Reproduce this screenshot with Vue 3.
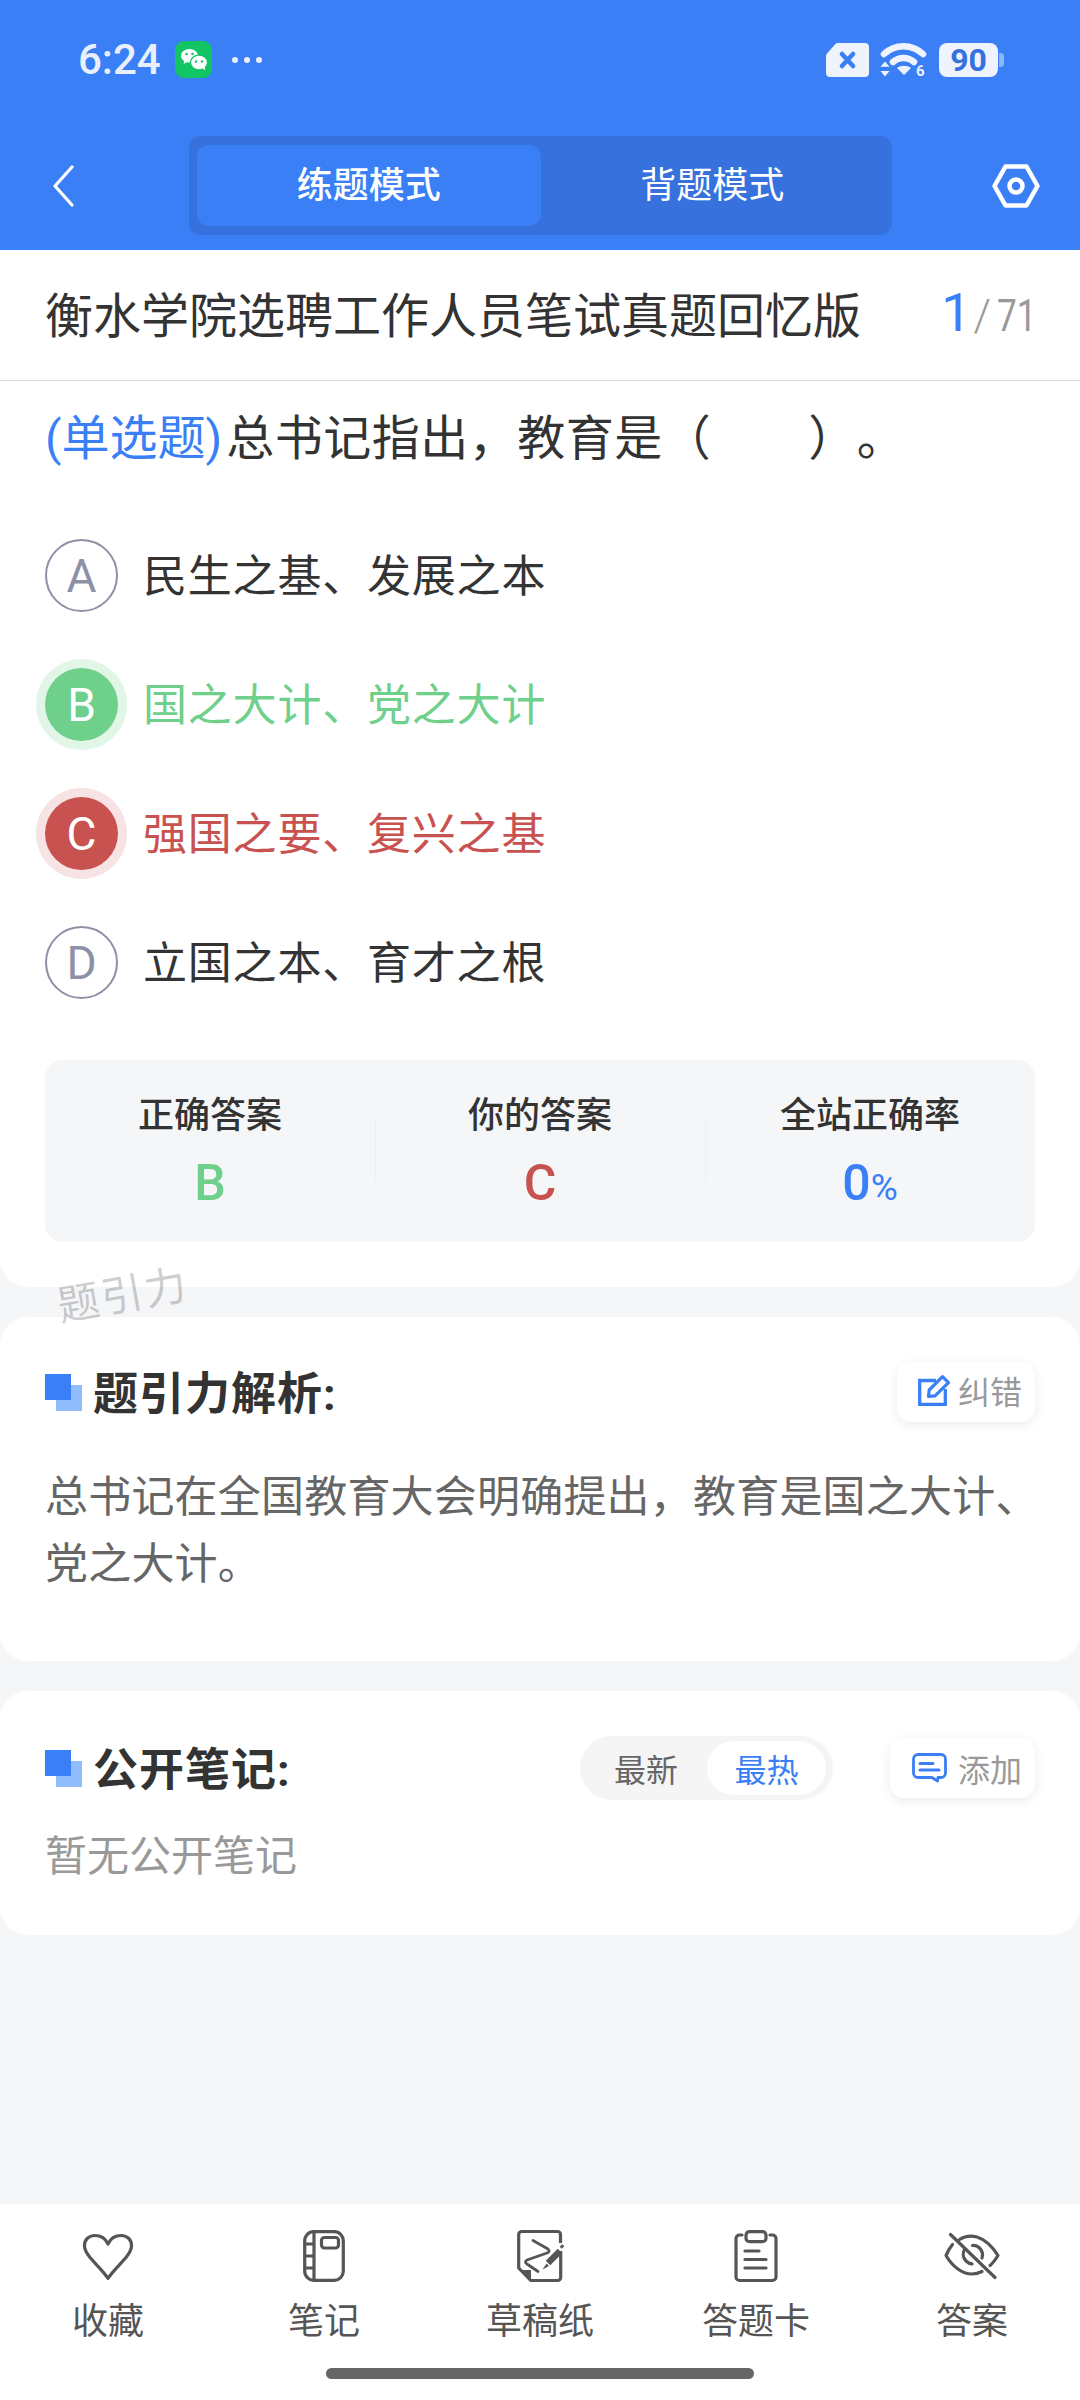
<script setup>
const options = [
  { key: 'A', text: '民生之基、发展之本', state: '' },
  { key: 'B', text: '国之大计、党之大计', state: 'right' },
  { key: 'C', text: '强国之要、复兴之基', state: 'wrong' },
  { key: 'D', text: '立国之本、育才之根', state: '' },
];
</script>

<template>
  <div class="page">
    <header class="top">
      <div class="status">
        <span class="time">6:24</span>
        <svg class="wechat" viewBox="0 0 37 37">
          <rect width="37" height="37" rx="9" fill="#11c464" />
          <path d="M14.5 8C9.8 8 6 11 6 14.8c0 2.2 1.3 4.1 3.2 5.3L8.6 23l3.2-1.7c.9.2 1.8.3 2.7.3 4.7 0 8.5-3 8.5-6.8S19.2 8 14.5 8z" fill="#fff" />
          <ellipse cx="24" cy="21.5" rx="8.6" ry="7.4" fill="#fff" stroke="#11c464" stroke-width="1.4" />
          <path d="M27.5 27l2.6 2.4-.4-3.6z" fill="#fff" />
          <circle cx="11.5" cy="13" r="1.3" fill="#11c464" />
          <circle cx="17.5" cy="13" r="1.3" fill="#11c464" />
          <circle cx="21" cy="20.5" r="1.2" fill="#11c464" />
          <circle cx="27" cy="20.5" r="1.2" fill="#11c464" />
        </svg>
        <span class="dots"><i></i><i></i><i></i></span>
        <span class="status-right">
          <svg class="sim" viewBox="0 0 43 34">
            <path d="M12 0h27a4 4 0 0 1 4 4v26a4 4 0 0 1-4 4H4a4 4 0 0 1-4-4V13a4 4 0 0 1 1.2-2.8L9.2 1.2A4 4 0 0 1 12 0z" fill="#eef3fd" />
            <path d="M16 11l11 12M27 11L16 23" stroke="#3b7ff6" stroke-width="4.6" stroke-linecap="round" />
          </svg>
          <svg class="wifi" viewBox="0 0 47 42">
            <path d="M4 12C15 1.500 32 1.500 43 12" fill="none" stroke="#eef3fd" stroke-width="6.500" stroke-linecap="round" />
            <path d="M13 20C19 14.500 28 14.500 34 20" fill="none" stroke="#eef3fd" stroke-width="6.500" stroke-linecap="round" />
            <path d="M17 26c3.500-3 10.500-3 14 0l-7 7z" fill="#eef3fd" />
            <path d="M5 19.500l4.500 5.200H.5zM5 34.500l4.500-5.400H.5z" fill="#eef3fd" />
            <text x="36" y="34" class="wifi-six">6</text>
          </svg>
          <span class="battery"><span class="battery-num">90</span></span>
        </span>
      </div>
      <nav class="nav">
        <svg class="back" viewBox="0 0 22 42">
          <path d="M20 2L3 21l17 19" fill="none" stroke="#fff" stroke-width="3.200" stroke-linecap="round" stroke-linejoin="round" />
        </svg>
        <div class="tabs">
          <div class="tab active">练题模式</div>
          <div class="tab">背题模式</div>
        </div>
        <svg class="setting" viewBox="0 0 48 44">
          <path d="M13.500 2.500h21L45.500 22 34.500 41.500h-21L2.500 22z" fill="none" stroke="#fff" stroke-width="4.500" stroke-linejoin="round" />
          <circle cx="24" cy="22" r="6.500" fill="none" stroke="#fff" stroke-width="4.500" />
        </svg>
      </nav>
    </header>

    <section class="card question-card">
      <div class="title-row">
        <span class="paper-title">衡水学院选聘工作人员笔试真题回忆版</span>
        <span class="counter"><b>1</b><em>/</em><span class="total"><span>71</span></span></span>
      </div>
      <div class="question-body">
        <p class="question"><span class="q-type">(单选题)</span>总书记指出，教育是（　　）。</p>
        <ul class="options">
          <li v-for="opt in options" :key="opt.key" :class="['option', opt.state]">
            <span class="letter">{{ opt.key }}</span>
            <span class="opt-text">{{ opt.text }}</span>
          </li>
        </ul>
        <div class="stats">
          <div class="stat">
            <div class="stat-label">正确答案</div>
            <div class="stat-value green">B</div>
          </div>
          <div class="stat">
            <div class="stat-label">你的答案</div>
            <div class="stat-value red">C</div>
          </div>
          <div class="stat">
            <div class="stat-label">全站正确率</div>
            <div class="stat-value blue">0<small>%</small></div>
          </div>
        </div>
      </div>
    </section>

    <section class="card block analysis">
      <div class="block-head">
        <h2 class="block-title"><i class="mark"></i><span class="title-text">题引力解析:</span></h2>
        <div class="mini-btn fix">
          <svg class="edit-icon" viewBox="0 0 33 32">
            <path d="M18 6.500H1.700v23.800h25.600V15" fill="none" stroke="#3b7ff6" stroke-width="3.300" />
            <path d="M10.500 22.500l.7-6.500L24.500 2.700l6 6L17 21.800z" fill="none" stroke="#3b7ff6" stroke-width="3.200" stroke-linejoin="round" />
          </svg>
          <span>纠错</span>
        </div>
      </div>
      <p class="analysis-text">总书记在全国教育大会明确提出，教育是国之大计、党之大计。</p>
    </section>

    <section class="card block notes">
      <div class="block-head">
        <h2 class="block-title"><i class="mark"></i><span class="title-text">公开笔记:</span></h2>
        <div class="segment">
          <span class="seg">最新</span>
          <span class="seg on">最热</span>
        </div>
        <div class="mini-btn add">
          <svg class="add-icon" viewBox="0 0 35 30">
            <path d="M6 1.500h23a4.500 4.500 0 0 1 4.500 4.500v14a4.500 4.500 0 0 1-4.500 4.500h-3l-.5 3.500-5.500-3.500H6A4.500 4.500 0 0 1 1.500 20V6A4.500 4.500 0 0 1 6 1.500z" fill="none" stroke="#3b7ff6" stroke-width="2.800" stroke-linejoin="round" />
            <path d="M8 10.500h13M8 17h19" stroke="#3b7ff6" stroke-width="3" stroke-linecap="round" />
          </svg>
          <span>添加</span>
        </div>
      </div>
      <p class="empty">暂无公开笔记</p>
    </section>

    <footer class="bar">
      <div class="bar-items">
        <div class="bar-item">
          <svg class="bar-icon" viewBox="0 0 56 56" width="56" height="56">
            <path d="M28 50.500C20 38 4.500 28 4.500 17.500 4.500 11 9.500 7.500 15 7.500c5.500 0 10.500 3 13 8.500 2.500-5.500 7.500-8.500 13-8.500 5.500 0 10.500 3.500 10.500 10C51.500 28 36 38 28 50.500z" fill="none" stroke="#555" stroke-width="3.200" stroke-linejoin="round" />
          </svg>
          <span>收藏</span>
        </div>
        <div class="bar-item">
          <svg class="bar-icon" viewBox="0 0 56 56" width="56" height="56">
            <g transform="translate(7 2)" fill="none" stroke="#555" stroke-width="3.200">
              <rect x="1.700" y="1.700" width="38.600" height="48.600" rx="9" />
              <path d="M11 2v48M2 14h9M2 26h9M2 38h9" />
              <rect x="18.500" y="7.500" width="17" height="10.500" rx="3" />
            </g>
          </svg>
          <span>笔记</span>
        </div>
        <div class="bar-item">
          <svg class="bar-icon" viewBox="0 0 56 56" width="56" height="56">
            <g transform="translate(5 2)" fill="none" stroke="#555" stroke-width="3.200">
              <path d="M43.500 13V4.500a3 3 0 0 0-3-3H4.700a3 3 0 0 0-3 3V38l12 12.500h27a3 3 0 0 0 3-3V21" stroke-linejoin="round" />
              <path d="M1.500 40h12.500v10.500z" fill="#555" stroke="none" />
              <path d="M16 10.500l15 8.500c2 1.500 1 3-1 4L10 30c-2 1-2 3 0 4l11 7.500" stroke-width="2.800" stroke-linecap="round" stroke-linejoin="round" />
              <path d="M31 33l12-12" stroke-width="6.400" />
              <path d="M44 15.500l2 2" stroke-width="3.600" />
              <path d="M25.500 39.500l4-6 2.500 2.500z" fill="#555" stroke="none" />
            </g>
          </svg>
          <span>草稿纸</span>
        </div>
        <div class="bar-item">
          <svg class="bar-icon" viewBox="0 0 56 56" width="56" height="56">
            <g transform="translate(6 2)" fill="none" stroke="#555" stroke-width="3.200" stroke-linecap="round">
              <path d="M8 5H5.500a3.500 3.500 0 0 0-3.500 3.500v38.500a3.500 3.500 0 0 0 3.500 3.500h33a3.500 3.500 0 0 0 3.500-3.500V8.500A3.500 3.500 0 0 0 38.500 5H36" />
              <rect x="12" y="1.700" width="20" height="10" rx="3.500" />
              <path d="M11 21h14M11 29.500h21M11 38h21" />
            </g>
          </svg>
          <span>答题卡</span>
        </div>
        <div class="bar-item">
          <svg class="bar-icon" viewBox="0 0 56 56" width="56" height="56">
            <g transform="translate(0 5)" fill="none" stroke="#555" stroke-width="3.200" stroke-linecap="round">
              <path d="M6.500 1.500L51 44.500" />
              <path d="M15.500 6.500C21 3 27 2.500 33 4c8 2.500 15 9 21 18.500-2.500 4-5 7.500-8 10" stroke-linejoin="round" />
              <path d="M8.500 11.500C6 14.500 4 18 2 22.500 8 33 18 41 28 41c3.500 0 7-1 10-2.500" stroke-linejoin="round" />
              <path d="M21 15.500c-2.500 4-2.500 9 1 12.500 1.800 1.800 4 2.700 6 2.800" />
              <path d="M28.500 12.500c2.300-.3 5 .5 7 2.500 3 3 3.500 7 2.500 10" />
            </g>
          </svg>
          <span>答案</span>
        </div>
      </div>
      <div class="home-line"></div>
    </footer>

    <div class="watermark">题引力</div>
  </div>
</template>

<style>
html,
body {
  margin: 0;
  background: #f5f6f8;
}
</style>

<style scoped>
.page {
  position: relative;
  display: flex;
  flex-direction: column;
  width: 1080px;
  height: 2400px;
  overflow: hidden;
  background: #f5f6f8;
  color: #333;
  font-family: Roboto, "Noto Sans CJK SC", sans-serif;
}

p,
ul,
h2 {
  margin: 0;
  padding: 0;
}

/* header */
.top {
  height: 250px;
  box-sizing: border-box;
  padding-top: 41px;
  background: #3b7ff6;
}

.status {
  display: flex;
  align-items: center;
  height: 37px;
  padding: 0 82px 0 78px;
}

.time {
  width: 97px;
  font-size: 42px;
  font-weight: 500;
  line-height: 37px;
  color: #e9effd;
}

.wechat {
  width: 37px;
  height: 37px;
}

.dots {
  display: flex;
  gap: 6px;
  margin-left: 20px;
}

.dots i {
  width: 6px;
  height: 6px;
  border-radius: 50%;
  background: #e9effd;
}

.status-right {
  display: flex;
  align-items: center;
  margin-left: auto;
}

.sim {
  width: 43px;
  height: 34px;
}

.wifi {
  width: 47px;
  height: 42px;
  margin: 7px 0 0 11px;
}

.wifi-six {
  font-size: 15px;
  font-weight: 700;
  fill: #eef3fd;
}

.battery {
  position: relative;
  display: flex;
  align-items: center;
  justify-content: center;
  width: 59px;
  height: 34px;
  margin-left: 12px;
  border-radius: 8px;
  background: #eef3fd;
}

.battery::after {
  content: '';
  position: absolute;
  right: -6px;
  top: 10px;
  width: 5px;
  height: 14px;
  border-radius: 0 4px 4px 0;
  background: #8fb5f9;
}

.battery-num {
  font-size: 32px;
  font-weight: 700;
  line-height: 34px;
  color: #3671dd;
}

.nav {
  display: flex;
  align-items: center;
  height: 99px;
  margin-top: 58px;
}

.back {
  width: 22px;
  height: 42px;
  margin-left: 52px;
}

.tabs {
  display: flex;
  box-sizing: border-box;
  width: 703px;
  height: 99px;
  margin-left: 115px;
  padding: 9px 8px;
  border-radius: 12px;
  background: #3671dd;
}

.tab {
  flex: 1;
  padding-top: 1px;
  font-size: 36px;
  line-height: 81px;
  text-align: center;
  color: #fff;
}

.tab.active {
  border-radius: 12px;
  background: #3b7ff6;
  font-weight: 500;
}

.setting {
  width: 48px;
  height: 44px;
  margin-left: 100px;
}

/* cards */
.card {
  background: #fff;
}

.question-card {
  border-radius: 0 0 28px 28px;
}

.title-row {
  display: flex;
  align-items: center;
  justify-content: space-between;
  height: 124px;
  padding: 0 44px 6px 45px;
  border-bottom: 1px solid #dcdcdc;
}

.paper-title {
  font-size: 48px;
  white-space: nowrap;
  color: #333;
}

.counter {
  display: flex;
  align-items: baseline;
  color: #999;
  font-size: 44px;
}

.counter b {
  font-size: 54px;
  font-weight: 400;
  color: #3b7ff6;
}

.counter em {
  margin: 0 6px 0 2px;
  font-style: normal;
  font-weight: 300;
}

.total {
  display: inline-block;
  width: 39px;
}

.total span {
  display: inline-block;
  transform: scaleX(0.8);
  transform-origin: left;
}

.question-body {
  padding: 22px 45px 45px;
}

.question {
  font-size: 48px;
  letter-spacing: 0.5px;
  line-height: 72px;
  text-spacing-trim: space-all;
  white-space: nowrap;
}

.q-type {
  margin-right: 4px;
  letter-spacing: 0;
  color: #3b7ff6;
}

.options {
  margin-top: 36px;
  list-style: none;
}

.option {
  display: flex;
  align-items: center;
  height: 129px;
}

.letter {
  display: flex;
  align-items: center;
  justify-content: center;
  box-sizing: border-box;
  width: 73px;
  height: 73px;
  border: 2px solid #8e90a6;
  border-radius: 50%;
  font-size: 46px;
  font-weight: 400;
  color: #8e90a6;
}

.opt-text {
  margin-left: 25px;
  padding-top: 2px;
  font-size: 44px;
  letter-spacing: 0.8px;
  line-height: 60px;
  white-space: nowrap;
}

.option.right .letter {
  border: 0;
  background: #6fd08c;
  box-shadow: 0 0 0 9px #e2f6e8;
  color: #fff;
}

.option.right .opt-text {
  color: #6fd08c;
}

.option.wrong .letter {
  border: 0;
  background: #c8524f;
  box-shadow: 0 0 0 9px #f7e3e3;
  color: #fff;
}

.option.wrong .opt-text {
  color: #c8524f;
}

.stats {
  display: grid;
  grid-template-columns: repeat(3, 1fr);
  height: 182px;
  margin-top: 33px;
  border-radius: 18px;
  background: #f5f6f8;
}

.stat {
  position: relative;
  text-align: center;
  padding-top: 33px;
}

.stat + .stat::before {
  content: '';
  position: absolute;
  left: 0;
  top: 61px;
  width: 1px;
  height: 60px;
  background: #eceef1;
}

.stat-label {
  font-size: 36px;
  font-weight: 500;
  line-height: 46px;
  color: #333;
}

.stat-value {
  margin-top: 17px;
  font-size: 50px;
  font-weight: 500;
  line-height: 54px;
}

.stat-value small {
  font-size: 37px;
  font-weight: 400;
}

.green {
  color: #6fd08c;
}

.red {
  color: #c8524f;
}

.blue {
  color: #3b7ff6;
}

.block {
  margin-top: 30px;
  border-radius: 28px;
  padding: 45px 45px 0;
}

.block-head {
  display: flex;
  align-items: center;
}

.block-title {
  display: flex;
  align-items: center;
  flex: 1;
  height: 60px;
  font-size: 45px;
  font-weight: 700;
  letter-spacing: 1px;
  line-height: 60px;
  color: #333;
}

.title-text {
  padding-top: 3px;
  margin-bottom: -3px;
}

.mark {
  width: 37px;
  height: 37px;
  margin-right: 11px;
  background:
    linear-gradient(#3b7ff6, #3b7ff6) 0 0 / 26px 26px no-repeat,
    linear-gradient(#90bcfb, #90bcfb) 11px 11px / 26px 26px no-repeat;
}

.mini-btn {
  display: flex;
  align-items: center;
  gap: 7px;
  box-sizing: border-box;
  width: 138px;
  height: 60px;
  padding-left: 21px;
  border-radius: 14px;
  background: #fff;
  box-shadow: 0 3px 12px rgba(0, 0, 0, 0.08);
  font-size: 32px;
  color: #999;
}

.mini-btn.fix {
  padding-bottom: 4px;
}

.mini-btn.add {
  width: 145px;
  gap: 11px;
  margin-left: 57px;
  padding-left: 22px;
}

.edit-icon {
  width: 33px;
  height: 32px;
}

.add-icon {
  width: 35px;
  height: 30px;
}

.analysis {
  height: 344px;
  box-sizing: border-box;
}

.analysis-text {
  margin: 42px -10px 0 0;
  font-size: 43px;
  letter-spacing: 0.2px;
  line-height: 67px;
  color: #666;
}

.notes {
  height: 244px;
  box-sizing: border-box;
}

.segment {
  display: flex;
  align-items: center;
  justify-content: space-between;
  box-sizing: border-box;
  width: 253px;
  height: 64px;
  padding: 0 7px 0 34px;
  border-radius: 32px;
  background: #f5f5f5;
  font-size: 32px;
  color: #666;
}

.seg.on {
  display: flex;
  align-items: center;
  justify-content: center;
  width: 119px;
  height: 54px;
  border-radius: 27px;
  background: #fff;
  color: #3b7ff6;
}

.empty {
  margin-top: 27px;
  font-size: 42px;
  line-height: 60px;
  color: #999;
}

/* bottom bar */
.bar {
  display: flex;
  flex-direction: column;
  align-items: center;
  height: 196px;
  margin-top: auto;
  background: #fff;
}

.bar-items {
  display: flex;
  width: 100%;
  padding-top: 24px;
}

.bar-item {
  flex: 1;
  display: flex;
  flex-direction: column;
  align-items: center;
  gap: 13px;
  font-size: 36px;
  line-height: 50px;
  color: #555;
}

.bar-icon {
  display: block;
}

.home-line {
  width: 428px;
  height: 11px;
  margin-top: 21px;
  border-radius: 6px;
  background: #666;
}

.watermark {
  position: absolute;
  left: 57px;
  top: 1266px;
  font-size: 42px;
  letter-spacing: 2px;
  line-height: 60px;
  color: rgba(0, 0, 0, 0.2);
  transform: rotate(-10deg);
}
</style>
